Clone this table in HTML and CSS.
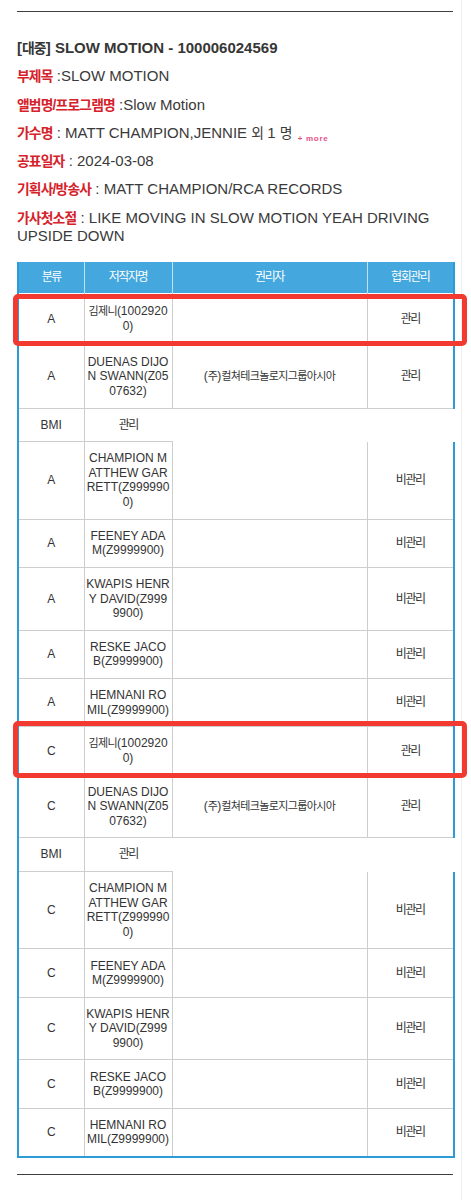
FILE: index.html
```html
<!DOCTYPE html>
<html lang="ko">
<head>
<meta charset="utf-8">
<title>SLOW MOTION</title>
<link rel="stylesheet" href="styles.css">
</head>
<body>
<div class="page">
  <div class="rule"></div>
  <p class="title">[<span class="ko">대중</span>] SLOW MOTION - 100006024569</p>
  <div class="info">
    <p class="item"><span class="label ko">부제목</span> :SLOW MOTION</p>
    <p class="item"><span class="label ko">앨범명/프로그램명</span> :Slow Motion</p>
    <p class="item"><span class="label ko">가수명</span> : MATT CHAMPION,JENNIE <span class="ko">외</span> 1 <span class="ko">명</span><span class="more">+ more</span></p>
    <p class="item"><span class="label ko">공표일자</span> : 2024-03-08</p>
    <p class="item"><span class="label ko">기획사/방송사</span> : MATT CHAMPION/RCA RECORDS</p>
    <p class="item"><span class="label ko">가사첫소절</span> : LIKE MOVING IN SLOW MOTION YEAH DRIVING UPSIDE DOWN</p>
  </div>
  <table class="rights">
    <colgroup>
      <col class="c-type"><col class="c-name"><col class="c-owner"><col class="c-mgmt">
    </colgroup>
    <thead>
      <tr><th class="ko">분류</th><th class="ko">저작자명</th><th class="ko">권리자</th><th class="ko">협회관리</th></tr>
    </thead>
    <tbody>
      <tr class="mark mark-a"><td>A</td><td class="name"><span class="ko">김제니</span>(1002920<br>0)</td><td></td><td class="last ko">관리</td></tr>
      <tr><td>A</td><td class="name">DUENAS DIJO<br>N SWANN(Z05<br>07632)</td><td>(<span class="ko">주</span>)<span class="ko">컬쳐테크놀로지그룹아시아</span></td><td class="last ko">관리</td></tr>
      <tr><td>BMI</td><td class="ko">관리</td></tr>
      <tr><td>A</td><td class="name">CHAMPION M<br>ATTHEW GAR<br>RETT(Z999990<br>0)</td><td></td><td class="last ko">비관리</td></tr>
      <tr><td>A</td><td class="name">FEENEY ADA<br>M(Z9999900)</td><td></td><td class="last ko">비관리</td></tr>
      <tr><td>A</td><td class="name">KWAPIS HENR<br>Y DAVID(Z999<br>9900)</td><td></td><td class="last ko">비관리</td></tr>
      <tr><td>A</td><td class="name">RESKE JACO<br>B(Z9999900)</td><td></td><td class="last ko">비관리</td></tr>
      <tr><td>A</td><td class="name">HEMNANI RO<br>MIL(Z9999900)</td><td></td><td class="last ko">비관리</td></tr>
      <tr class="mark mark-c"><td>C</td><td class="name"><span class="ko">김제니</span>(1002920<br>0)</td><td></td><td class="last ko">관리</td></tr>
      <tr><td>C</td><td class="name">DUENAS DIJO<br>N SWANN(Z05<br>07632)</td><td>(<span class="ko">주</span>)<span class="ko">컬쳐테크놀로지그룹아시아</span></td><td class="last ko">관리</td></tr>
      <tr><td>BMI</td><td class="ko">관리</td></tr>
      <tr><td>C</td><td class="name">CHAMPION M<br>ATTHEW GAR<br>RETT(Z999990<br>0)</td><td></td><td class="last ko">비관리</td></tr>
      <tr><td>C</td><td class="name">FEENEY ADA<br>M(Z9999900)</td><td></td><td class="last ko">비관리</td></tr>
      <tr><td>C</td><td class="name">KWAPIS HENR<br>Y DAVID(Z999<br>9900)</td><td></td><td class="last ko">비관리</td></tr>
      <tr><td>C</td><td class="name">RESKE JACO<br>B(Z9999900)</td><td></td><td class="last ko">비관리</td></tr>
      <tr class="end"><td>C</td><td class="name">HEMNANI RO<br>MIL(Z9999900)</td><td></td><td class="last ko">비관리</td></tr>
    </tbody>
  </table>
  <div class="rule rule-bottom"></div>
</div>
</body>
</html>
```

FILE: styles.css
```css
* { box-sizing: border-box; }

html, body {
  margin: 0;
  padding: 0;
  background: #ffffff;
}

body {
  font-family: "Liberation Sans", "Noto Sans CJK KR", sans-serif;
  color: #333333;
}

.page {
  width: 462px;
  min-height: 1200px;
  padding: 11px 8px 0 17px;
  border-right: 1px solid #efefef;
}

.rule {
  height: 1px;
  background: #3f3f3f;
}

.rule-bottom {
  margin-top: 16px;
}

.ko {
  font-size: 0.92em;
  line-height: 1;
  letter-spacing: -0.06em;
}

.title {
  margin: 27px 0 0;
  font-size: 15px;
  line-height: 18px;
  font-weight: bold;
  color: #363636;
}

.info {
  display: flex;
  flex-direction: column;
}

.item {
  margin: 10.3px 0 0;
  font-size: 15px;
  line-height: 18px;
  color: #3a3a3a;
}

.label {
  color: #d5222b;
  font-weight: bold;
}

.more {
  margin-left: 6px;
  font-size: 8px;
  line-height: 0;
  font-weight: bold;
  letter-spacing: 0.7px;
  color: #e6508a;
  vertical-align: -3px;
}

.rights {
  margin-top: 17.5px;
  width: 436px;
  table-layout: fixed;
  border-collapse: collapse;
  font-size: 12px;
  line-height: 14.5px;
  color: #333333;
}

.c-type { width: 66px; }
.c-name { width: 88px; }
.c-owner { width: 195px; }
.c-mgmt { width: 87px; }

.rights th {
  padding: 8px 2px;
  background: #44a7dd;
  color: #ffffff;
  font-weight: normal;
  border-left: 1px solid #bfe1f4;
  text-align: center;
}

.rights th.ko,
.rights td.ko {
  font-size: 12px;
  line-height: 14.5px;
  letter-spacing: -0.12em;
}

.rights th:first-child { border-left: 2px solid #2d9cd6; }
.rights th:last-child { border-right: 2px solid #2d9cd6; }

.rights td {
  padding: 9.15px 1px;
  text-align: center;
  vertical-align: middle;
  border-left: 1px solid #cdcdcd;
  border-bottom: 1px solid #cdcdcd;
}

.rights td.name { white-space: nowrap; }

.rights td:first-child { border-left: 2px solid #2d9cd6; }
.rights td.last { border-right: 2px solid #2d9cd6; }
.rights tr.end td { border-bottom: 2px solid #2d9cd6; }

.rights tr.mark-a td {
  padding-top: 11.5px;
  padding-bottom: 11.5px;
}

/* red annotation boxes drawn over highlighted rows */
.mark td:first-child { position: relative; }

.mark td:first-child::after {
  content: "";
  position: absolute;
  left: -6px;
  width: 444px;
  border: 5px solid #f23a30;
  border-radius: 5px;
}

.mark-a td:first-child::after {
  top: 1px;
  bottom: -1px;
}

.mark-c td:first-child::after {
  top: -6px;
  bottom: -3px;
}
```
